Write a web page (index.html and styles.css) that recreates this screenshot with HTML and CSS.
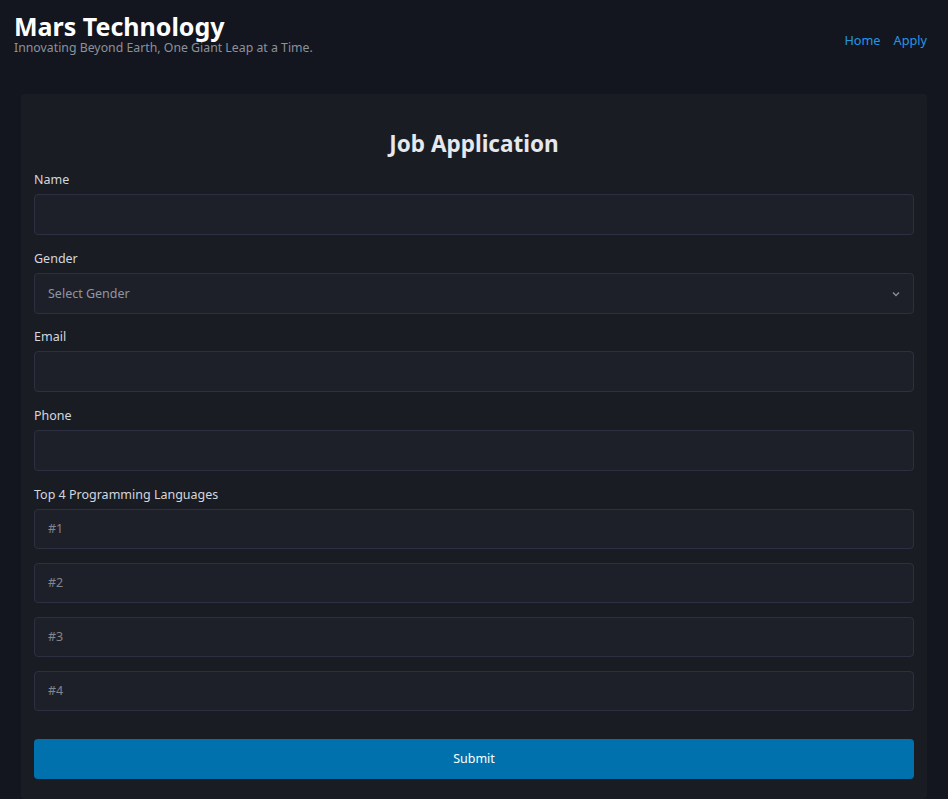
FILE: index.html
```html
<!DOCTYPE html>
<html lang="en">
<head>
<meta charset="utf-8">
<title>Mars Technology</title>
<link rel="stylesheet" href="styles.css">
</head>
<body>
<header class="site-header">
  <div class="brand">
    <h1 class="brand-title">Mars Technology</h1>
    <p class="brand-tagline">Innovating Beyond Earth, One Giant Leap at a Time.</p>
  </div>
  <nav class="nav">
    <a href="#" class="nav-link">Home</a>
    <a href="#" class="nav-link">Apply</a>
  </nav>
</header>
<main class="main">
  <section class="card">
    <h2 class="card-title">Job Application</h2>
    <form class="form">
      <div class="field">
        <label class="label">Name</label>
        <input class="input" type="text">
      </div>
      <div class="field">
        <label class="label">Gender</label>
        <div class="select-wrap">
          <select class="input select">
            <option>Select Gender</option>
          </select>
          <svg class="chevron" width="10" height="10" viewBox="0 0 10 10"><path d="M2 3.5 L5 6.5 L8 3.5" fill="none" stroke="#8a8f9c" stroke-width="1.3"/></svg>
        </div>
      </div>
      <div class="field">
        <label class="label">Email</label>
        <input class="input" type="email">
      </div>
      <div class="field">
        <label class="label">Phone</label>
        <input class="input" type="tel">
      </div>
      <div class="field field-last">
        <label class="label">Top 4 Programming Languages</label>
        <div class="lang-list">
          <input class="input input-sm" type="text" placeholder="#1">
          <input class="input input-sm" type="text" placeholder="#2">
          <input class="input input-sm" type="text" placeholder="#3">
          <input class="input input-sm" type="text" placeholder="#4">
        </div>
      </div>
      <button class="submit" type="button">Submit</button>
    </form>
  </section>
</main>
</body>
</html>
```
FILE: styles.css
```css
* { box-sizing: border-box; }
html, body { margin: 0; padding: 0; }
body {
  background: #13161e;
  font-family: "Noto Sans", "Open Sans", sans-serif;
  color: #d6dae2;
  height: 799px;
  overflow: hidden;
}
.site-header {
  display: flex;
  justify-content: space-between;
  align-items: flex-start;
  padding: 11px 21px 0 14px;
  height: 72px;
}
.brand-title {
  margin: 0;
  font-size: 25px;
  font-weight: 700;
  line-height: 30px;
  color: #ffffff;
}
.brand-tagline {
  margin: 0;
  font-size: 12.3px;
  line-height: 14px;
  color: #8c919c;
}
.nav {
  display: flex;
  gap: 13px;
  margin-top: 19px;
}
.nav-link {
  color: #2596e6;
  text-decoration: none;
  font-size: 12.7px;
  line-height: 20px;
}
.main {
  padding: 22px 21px 0 21px;
}
.card {
  background: #1a1c24;
  border-radius: 4px;
  padding: 27px 13px 20px 13px;
}
.card-title {
  margin: 8px 0 11px 0;
  text-align: center;
  font-size: 22.5px;
  font-weight: 700;
  line-height: 30px;
  color: #e4e8ef;
}
.form { display: flex; flex-direction: column; }
.field { display: flex; flex-direction: column; margin-bottom: 13.67px; }
.field-last { margin-bottom: 28px; }
.label {
  font-size: 12.5px;
  line-height: 20px;
  color: #d3d7df;
  margin-bottom: 4px;
}
.input {
  width: 100%;
  height: 41px;
  background: #1e2029;
  border: 1px solid #2d3040;
  border-radius: 4px;
  padding: 0 13px;
  font-family: inherit;
  font-size: 12.5px;
  color: #8c919c;
  outline: none;
}
.input::placeholder { color: #80858f; }
.input-sm { height: 40px; }
.select-wrap { position: relative; }
.select {
  appearance: none;
  -webkit-appearance: none;
  color: #9096a1;
}
.chevron {
  position: absolute;
  right: 13px;
  top: 16px;
  pointer-events: none;
}
.lang-list { display: flex; flex-direction: column; gap: 14px; }
.submit {
  height: 40px;
  width: 100%;
  background: #0071ad;
  border: none;
  border-radius: 4px;
  color: #ffffff;
  font-family: inherit;
  font-size: 12.5px;
}
```
